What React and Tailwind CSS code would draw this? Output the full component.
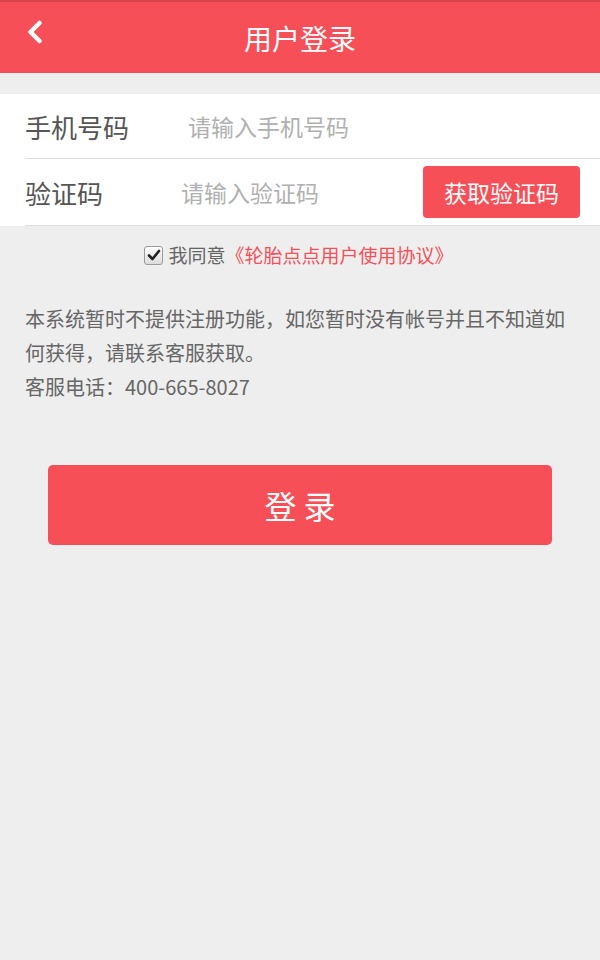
import { ChevronLeft } from "lucide-react";

const font = { fontFamily: '"Noto Sans CJK SC", "Noto Sans", sans-serif' };

export default function App() {
  return (
    <div className="min-h-[960px] w-[600px] bg-[#eeeeee]" style={font}>
      {/* header */}
      <div className="relative flex h-[73px] items-center justify-center border-t-2 border-[#d8444b] bg-[#f74f57]">
        <ChevronLeft className="absolute left-[17px] top-[12px] h-[36px] w-[36px] text-white" strokeWidth={3} />
        <h1 className="text-[28px] text-white">用户登录</h1>
      </div>

      {/* form */}
      <div className="mt-[21px] bg-white">
        <div className="ml-[25px] flex h-[65px] items-center border-b border-[#dddddd]">
          <span className="w-[163px] text-[26px] text-[#555555]">手机号码</span>
          <span className="text-[23px] text-[#b0b0b0]">请输入手机号码</span>
        </div>
        <div className="ml-[25px] flex h-[67px] items-center border-b border-[#dddddd] pr-[20px]">
          <span className="w-[156px] text-[26px] text-[#555555]">验证码</span>
          <span className="flex-1 text-[23px] text-[#b0b0b0]">请输入验证码</span>
          <button className="flex h-[52px] w-[157px] items-center justify-center rounded-[4px] bg-[#f74f57] text-[23px] text-white">
            获取验证码
          </button>
        </div>
      </div>

      {/* agreement */}
      <div className="mt-[15px] flex items-center justify-center pr-[2px]">
        <span className="mr-[5px] flex h-[19px] w-[19px] items-center justify-center rounded-[3px] border border-[#9a9a9a] bg-gradient-to-b from-white to-[#dcdcdc]">
          <svg width="14" height="14" viewBox="0 0 14 14">
            <path d="M2 7.5 L5.5 11 L12 3" fill="none" stroke="#222" strokeWidth="2.6" strokeLinecap="round" strokeLinejoin="round" />
          </svg>
        </span>
        <span className="text-[19px] text-[#666666]">我同意</span>
        <span className="text-[19px] text-[#f74f57]">《轮胎点点用户使用协议》</span>
      </div>

      {/* notice */}
      <div className="mt-[32px] px-[25px] text-[20px] leading-[34px] text-[#666666]">
        <p>本系统暂时不提供注册功能，如您暂时没有帐号并且不知道如何获得，请联系客服获取。</p>
        <p>客服电话：400-665-8027</p>
      </div>

      {/* login */}
      <div className="mt-[61px] px-[48px]">
        <button className="flex h-[80px] w-full items-center justify-center rounded-[5px] bg-[#f74f57] text-[32px] text-white">
          登 录
        </button>
      </div>
    </div>
  );
}
